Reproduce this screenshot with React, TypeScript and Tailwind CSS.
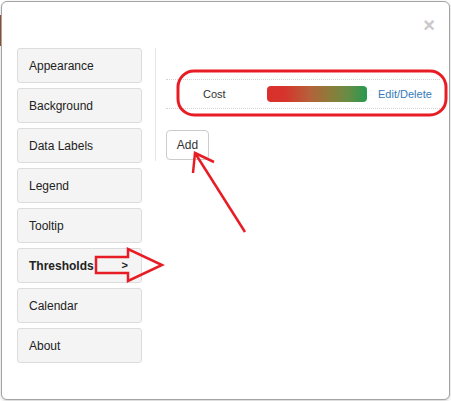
import React from "react";

const navItems = [
  "Appearance",
  "Background",
  "Data Labels",
  "Legend",
  "Tooltip",
  "Thresholds",
  "Calendar",
  "About",
];

function NavButton({ label, active }: { label: string; active?: boolean }) {
  return (
    <div className="h-[35px] w-[125px] rounded-[3px] border border-[#dcdcdc] bg-[#f4f4f4] pl-[11px] pr-[13px] flex items-center justify-between text-[12px] text-[#222]">
      <span className={active ? "font-bold" : ""}>{label}</span>
      {active && <span className="font-bold text-[11px]">&gt;</span>}
    </div>
  );
}

function Annotations() {
  return (
    <svg
      className="absolute left-0 top-0 pointer-events-none"
      width={451}
      height={401}
      viewBox="0 0 451 401"
      fill="none"
      stroke="#e81c24"
      strokeWidth={2.5}
      strokeLinejoin="miter"
    >
      {/* ring round the threshold row */}
      <rect x={178} y={71} width={268} height={44} rx={16} strokeWidth={3} />
      {/* arrow to Add */}
      <path d="M245 232 L195 153" />
      <path d="M193 173 L195 153 L214 162" />
      {/* arrow from Thresholds */}
      <path d="M96 257 L128 257 L128 249 L162 265 L128 281 L128 273 L96 273 Z" />
    </svg>
  );
}

export default function App() {
  return (
    <div
      className="relative w-[451px] h-[401px] overflow-hidden bg-white"
      style={{ fontFamily: '"Liberation Sans", Arial, sans-serif' }}
    >
      {/* page behind the dialog */}
      <div className="absolute left-[155px] top-[-8px] h-[10px] overflow-hidden text-[10px] leading-[10px] text-[#222] font-bold">2019</div>
      <div className="absolute left-0 top-[15px] w-[2px] h-[31px] bg-[#a0522d]" />

      {/* dialog */}
      <div className="absolute left-[1px] top-[1px] w-[449px] h-[399px] rounded-[6px] border border-[#a3a3a3] bg-white shadow-[0_1px_3px_rgba(0,0,0,0.2)]">
        <div className="h-[46px] flex justify-end items-start pr-[14px] pt-[13px]">
          <span className="text-[#c9c9c9] text-[20px] font-bold leading-[20px]">×</span>
        </div>

        <div className="flex">
          <div className="ml-[15px] flex flex-col gap-[5px]">
            {navItems.map((item) => (
              <NavButton key={item} label={item} active={item === "Thresholds"} />
            ))}
          </div>

          <div className="ml-[13px] h-[113px] border-l border-[#e5e5e5] pl-[10px] w-[285px]">
            <div className="mt-[31px] h-[30px] border-y border-dotted border-[#d4d4d4] flex items-center text-[11px]">
              <span className="ml-[37px] w-[64px] text-[#333]">Cost</span>
              <div
                className="w-[100px] h-[16px] rounded-[4px]"
                style={{
                  background:
                    "linear-gradient(to right, #db2f2b 0%, #d6342c 18%, #b6603a 42%, #8e7b3a 62%, #6a8c44 80%, #27994f 100%)",
                }}
              />
              <span className="ml-[11px] text-[#337ab7]">Edit/Delete</span>
            </div>
            <button className="mt-[21px] h-[30px] w-[43px] rounded-[4px] border border-[#ccc] bg-white text-[12px] text-[#333]">
              Add
            </button>
          </div>
        </div>
      </div>

      <Annotations />
    </div>
  );
}
